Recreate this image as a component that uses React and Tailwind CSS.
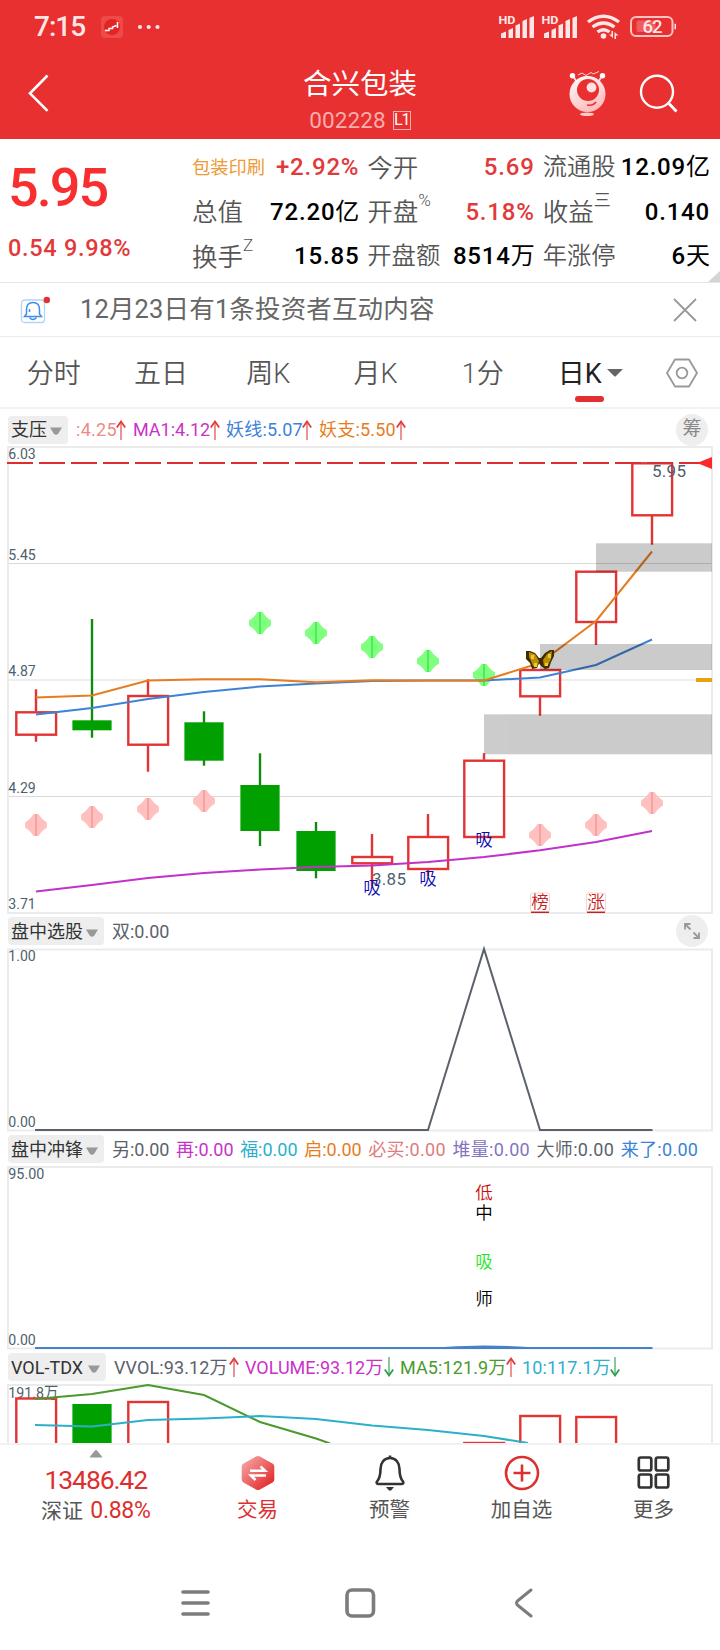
import React from "react";

// 每根K线的中心 x 坐标
const cx = (i) => 36 + i * 56;

const toPoints = (ys) => ys.map((y, i) => `${cx(i)},${y}`).join(" ");

const QUOTE_COLUMNS = [
  [
    { label: "包装印刷", value: "+2.92%", tag: true, up: true },
    { label: "总值", value: "72.20", unit: "亿" },
    { label: "换手", sup: "Z", value: "15.85" },
  ],
  [
    { label: "今开", value: "5.69", up: true },
    { label: "开盘", sup: "%", value: "5.18%", up: true },
    { label: "开盘额", value: "8514", unit: "万" },
  ],
  [
    { label: "流通股", value: "12.09", unit: "亿" },
    { label: "收益", sup: "三", value: "0.140" },
    { label: "年涨停", value: "6", unit: "天" },
  ],
];

const PERIODS = ["分时", "五日", "周K", "月K", "1分", "日K"];

// [high, top, bottom, low]
const CANDLES = [
  { up: true, p: [689.3, 711.3, 735.7, 741.7] },
  { up: false, p: [619, 720.3, 730.3, 737.7] },
  { up: true, p: [679.3, 695, 745.7, 771.7] },
  { up: false, p: [711.3, 722.3, 760.7, 765.7] },
  { up: false, p: [753.3, 785, 831, 846] },
  { up: false, p: [822, 831, 871, 878.3] },
  { up: true, p: [834, 856, 864.3, 886] },
  { up: true, p: [814, 836, 870, 876] },
  { up: true, p: [753.3, 759.7, 838, 838] },
  { up: true, p: [669, 669, 697.3, 715.7] },
  { up: true, p: [570.7, 570.7, 623, 645] },
  { up: true, p: [462.3, 462.3, 516.3, 544.7] },
];

const ORANGE_LINE = [697.5, 695.5, 680.5, 679.3, 679.3, 682.3, 680.3, 680.5, 680.5, 663, 621, 551.5];
const BLUE_LINE = [714.5, 708, 699, 692, 686.5, 683.5, 681, 680.5, 680.5, 677.5, 665, 639.5];
const PURPLE_LINE = [891.5, 885, 878, 873, 869.5, 867, 865.5, 862, 857, 850.3, 842, 831];

const RED_MARKS = [[0, 825], [1, 817], [2, 809], [3, 801], [9, 835], [10, 825], [11, 803]];
const GREEN_MARKS = [[4, 623], [5, 633], [6, 647], [7, 661], [8, 675]];

const Arrow = ({ down }) => (
  <svg width="10" height="20" viewBox="0 0 10 20" fill="none" className="shrink-0">
    {down ? (
      <g stroke="#2f9e4f">
        <path d="M5 0v18" strokeWidth="1.6" opacity="0.7" />
        <path d="M0.8 12.5 5 18.5 9.2 12.5" strokeWidth="1.8" />
      </g>
    ) : (
      <g stroke="#e03c3c">
        <path d="M5 2v18" strokeWidth="1.6" opacity="0.7" />
        <path d="M0.8 7.5 5 1.5 9.2 7.5" strokeWidth="1.8" />
      </g>
    )}
  </svg>
);

const Caret = () => (
  <svg width="12" height="8" viewBox="0 0 12 8" className="mt-[3px] shrink-0">
    <path d="M0 .5h12L8 7q-2 1.4-4 0z" fill="#999" />
  </svg>
);

const IndicatorButton = ({ children, className }) => (
  <div
    className={`flex h-[28px] items-center justify-between rounded-[4px] bg-[#eeeeee] pl-[3px] text-[18px] text-[#333] ${className}`}
  >
    <span className="whitespace-nowrap">{children}</span>
    <Caret />
  </div>
);

const StatusBar = () => (
  <div className="flex h-[54px] items-center pl-[34px] text-[#ffe6e6]">
    <span className="w-[50px] text-[28px] font-medium leading-none tracking-[-1px]">7:15</span>
    <svg width="60" height="24" viewBox="0 0 60 24" className="ml-4">
      <rect x="1" y="1" width="22" height="22" rx="4" fill="#ef4a4a" />
      <circle cx="12" cy="12" r="8" fill="#e32424" />
      <path d="M5 15.500h4v-2h3.500v-1.500l4-1.500M17.500 7v6" stroke="#fff" strokeWidth="1.5" fill="none" />
      <g fill="#ffe6e6">
        <circle cx="40" cy="12" r="2.1" />
        <circle cx="48.700" cy="12" r="2.1" />
        <circle cx="57.500" cy="12" r="2.1" />
      </g>
    </svg>
    <svg width="180" height="28" viewBox="496 13 180 28" className="ml-auto mr-[44px]" fill="#ffe6e6">
      {[499, 542].map((x) => (
        <g key={x}>
          <text x={x - 0.5} y="24" fontSize="11.5" fontWeight="700" textLength="17" lengthAdjust="spacingAndGlyphs">HD</text>
          <path d={`M${x + 2} 38v-4.500l5-2v6.500zM${x + 9.5} 38v-8l4.500-2v10zM${x + 16.5} 38V25.500l4.500-2V38zM${x + 23.5} 38V21l4.500-2v19zM${x + 30.5} 38V18l4.500-2v22z`} />
        </g>
      ))}
      <g fill="none" stroke="#ffe6e6" strokeWidth="3.400">
        <path d="M588 22q15.500-11.500 31 0" />
        <path d="M592.500 27q11-8 22 0" />
        <path d="M597.500 32q6-4.500 12 0" />
      </g>
      <circle cx="603.500" cy="36" r="2.800" />
      <path d="M613 31v7l-4-3.500h2.500V31zM614.500 39v-7l4 3.500h-2.500V39z" />
      <rect x="631" y="17" width="41.500" height="19" rx="5" fill="none" stroke="#ffc2c2" strokeWidth="2" />
      <rect x="636.500" y="20.500" width="19" height="11.500" rx="2" opacity="0.250" />
      <path d="M674.500 23.500q2.500 0 2.500 3t-2.500 3z" />
      <text x="642.500" y="33" fontSize="18.500" fontWeight="500" textLength="20">62</text>
    </svg>
  </div>
);

const Header = () => (
  <header className="h-[139px] bg-[#e83030]">
    <StatusBar />
    <div className="flex h-[85px] items-start">
      <svg width="213" height="80" viewBox="0 54 213 80" fill="none">
        <path d="M47.500 75.500 30 93.300l17.500 17.500" stroke="#fff" strokeWidth="2.600" />
      </svg>
      <div className="flex w-[294px] flex-col items-center pt-3 text-white">
        <h1 className="text-[28.500px] font-normal leading-[38px]">合兴包装</h1>
        <div className="mt-[3px] flex items-center gap-[7px]">
          <span className="text-[22.500px] leading-[26px] tracking-[0.1px] text-[#f9aeae]">002228</span>
          <span className="flex h-[19px] w-[18px] items-center justify-center border border-[#f9aeae] text-[16px] leading-none tracking-[-1px]">
            L1
          </span>
        </div>
      </div>
      <svg width="213" height="80" viewBox="507 54 213 80" fill="none">
        <defs>
          <linearGradient id="bot" x1="0" y1="0" x2="0.500" y2="1">
            <stop offset="0" stopColor="#fff" />
            <stop offset="1" stopColor="#ffbcbc" />
          </linearGradient>
        </defs>
        <path d="m573 76 4.500 7m24.500-7-4.500 7" stroke="#ffd8d8" strokeWidth="1.800" />
        <circle cx="572.500" cy="75.800" r="2.700" fill="#fff" />
        <circle cx="602.500" cy="75.800" r="2.700" fill="#fff" />
        <path d="m578 75 4-2 4 2.500 5-3 2 1.500 6-2.500" stroke="#ffd8d8" />
        <circle cx="587.500" cy="94" r="18" fill="url(#bot)" />
        <circle cx="588" cy="90" r="11" fill="#e83030" />
        <circle cx="591.500" cy="87.500" r="4.900" fill="#ffe2e2" />
        <path d="M587 105q6 1 9-3" stroke="#e83030" strokeWidth="1.600" />
        <ellipse cx="587" cy="114.300" rx="7" ry="1.700" fill="#ffcaca" />
        <circle cx="657" cy="91.700" r="16" stroke="#fff" strokeWidth="2.400" />
        <path d="m668 102.500 8.500 9" stroke="#fff" strokeWidth="2.800" />
      </svg>
    </div>
  </header>
);

const Quote = () => (
  <section className="relative flex h-[144px] border-b border-[#e6e6e6] bg-white">
    <div className="w-[192px] pl-2 text-[#f92f2f]">
      <div className="pt-[16px] text-[54px] font-medium leading-[66px] tracking-[-2px]">5.95</div>
      <div className="pt-[14px] text-[23.500px] font-medium leading-[26px] tracking-[0.700px] text-[#e23a3a]">
        0.54 9.98%
      </div>
    </div>
    <div className="grid w-[518px] grid-cols-3 gap-x-[8px] pt-[6px]">
      {QUOTE_COLUMNS.map((col, i) => (
        <div key={i}>
          {col.map((item) => (
            <div key={item.label} className="flex h-[44.500px] items-center justify-between whitespace-nowrap">
              <span
                className={
                  item.tag
                    ? "text-[18.300px] text-[#ee9a36]"
                    : item.label.length > 2
                      ? "text-[24.300px] font-[350] text-[#555]"
                      : "mt-px text-[25.500px] font-[350] text-[#555]"
                }
              >
                {item.label}
                {item.sup && <sup className="-top-[15px] text-[17px]">{item.sup}</sup>}
              </span>
              <span className={`text-[24px] tracking-[0.800px] ${item.up ? "text-[#e23a3a]" : "text-black"}`}>
                <span className="font-medium">{item.value}</span>
                {item.unit && <span className="tracking-normal">{item.unit}</span>}
              </span>
            </div>
          ))}
        </div>
      ))}
    </div>
    <svg width="12" height="11" viewBox="0 0 12 11" className="absolute bottom-0 right-0">
      <path d="M12 0v11H0z" fill="#d4d4d4" />
    </svg>
  </section>
);

const Notice = () => (
  <section className="flex h-[54px] items-center border-b border-[#ebebeb] pl-5 pr-[23px]">
    <svg width="32" height="28" viewBox="0 0 32 28" fill="none">
      <rect x="1.500" y="4" width="23" height="22.500" rx="3" stroke="#b5d3f5" strokeWidth="1.300" />
      <path d="M13 6.500c-4.500 0-6.500 3-6.500 7v4.500l-2 2.500h17l-2-2.500v-4.500c0-4-2-7-6.500-7z" stroke="#3f8fe8" strokeWidth="1.500" />
      <path d="M9.500 21.500q3.500 4 7 0M9.500 13v3" stroke="#3f8fe8" strokeWidth="1.500" />
      <circle cx="26.800" cy="4" r="3.200" fill="#e03030" />
    </svg>
    <span className="ml-[28px] text-[25.500px] tracking-[0.150px] text-[#666]">12月23日有1条投资者互动内容</span>
    <svg width="24" height="24" viewBox="0 0 24 24" className="ml-auto">
      <path d="m1 1 22 22M23 1 1 23" stroke="#999" strokeWidth="1.800" />
    </svg>
  </section>
);

const PeriodTabs = () => (
  <nav className="flex h-[72px] border-b-2 border-[#f2f2f2]">
    {PERIODS.map((name) => {
      const active = name === "日K";
      return (
        <div
          key={name}
          className={`relative flex w-[107.300px] items-center justify-center pt-[5px] text-[27px] ${active ? "text-[#222]" : "font-[350] text-[#555]"}`}
        >
          {name}
          {active && (
            <svg width="16" height="8" viewBox="0 0 16 8" className="ml-[5px] mt-[-4px]">
              <path d="M0 0h16L9 7q-1 1-2 0z" fill="#666" />
            </svg>
          )}
          {active && <span className="absolute bottom-[5px] left-[39px] h-[6px] w-[29px] rounded-[3px] bg-[#e23030]" />}
        </div>
      );
    })}
    <div className="flex flex-1 items-center justify-center pt-[1px]">
      <svg width="32" height="30" viewBox="0 0 32 30" fill="none" stroke="#999" strokeWidth="1.800">
        <path d="M9 1.500h14L31 15l-8 13.500H9L1 15z" strokeLinejoin="round" />
        <circle cx="16" cy="15" r="5.300" />
      </svg>
    </div>
  </nav>
);

const AxisLabel = ({ y, w = 27.5, children }) => (
  <text x="8.300" y={y} fontSize="15.500" fill="#4e5f6d" textLength={w} lengthAdjust="spacingAndGlyphs">
    {children}
  </text>
);

const Mark = ({ i, y, fill, line }) => (
  <g transform={`translate(${cx(i)} ${y})`}>
    <path d="M-2.500-11h5L5-7.500 7.500-5 11-2.500v5L7.500 5 5 7.500 2.500 11h-5L-5 7.500-7.500 5-11 2.500v-5L-7.500-5-5-7.500z" fill={fill} />
    <path d="M0-11v22" stroke={line} strokeWidth="1.600" />
  </g>
);

const Candle = ({ i, up, p: [high, top, bottom, low] }) =>
  up ? (
    <g stroke="#e23434" strokeWidth="2.400" fill="none">
      <path d={`M${cx(i)} ${high}V${top}M${cx(i)} ${bottom - 1}V${low}`} />
      <rect x={cx(i) - 19.7} y={top + 1} width="39.800" height={bottom - top - 2} />
    </g>
  ) : (
    <g>
      <path d={`M${cx(i)} ${high}V${low}`} stroke="#128a12" strokeWidth="2.400" />
      <rect x={cx(i) - 19.6} y={top} width="39.200" height={bottom - top} fill="#00a000" />
    </g>
  );

const Char = ({ x = 484, y, fill, children }) => (
  <text x={x} y={y + 6.3} fontSize="17.500" fontWeight="350" textAnchor="middle" fill={fill}>
    {children}
  </text>
);

const Butterfly = () => (
  <g>
    <path d="M526 651h4l5 2 4 5h2l4-5 5-3h4v6l-3 6-2 6-4 1-4-3-2-3-2 5-5 1-2-6-4-4z" fill="#3d2c00" />
    <path d="M529 652l6 2 4 7-2 6-4-1-2-5-2-4zM552 651l-5 3-4 6 1 6 4-1 3-6z" fill="#b98f08" />
    <path d="M531 655h3v4h-3zM548 654h3v4h-3zM534 663h3v4h-3zM545 663h3v3h-3z" fill="#f0cc20" />
  </g>
);

const MainChart = () => (
  <section>
    <div className="flex h-[37px] items-center pl-2 pr-[12px] pt-1 text-[18px]">
      <IndicatorButton className="w-[60px] pr-[6px]">支压</IndicatorButton>
      <div className="flex flex-1 items-center whitespace-nowrap pl-2">
        <span className="w-[40px] tracking-[0.300px] text-[#ee8a85]">:4.25</span>
        <Arrow />
        <span className="ml-[7px] w-[77px] text-[#c832c8]">MA1:4.12</span>
        <Arrow />
        <span className="ml-[6px] w-[76px] tracking-[0.200px] text-[#3c82d8]">妖线:5.07</span>
        <Arrow />
        <span className="ml-[7px] w-[77px] tracking-[0.200px] text-[#e67d1e]">妖支:5.50</span>
        <Arrow />
      </div>
      <span className="flex size-8 items-center justify-center rounded-full bg-[#eeeeee] text-[19px] text-[#888]">
        筹
      </span>
    </div>
    <svg width="720" height="468" viewBox="0 446 720 468" className="block" fill="none">
      <path d="M8 563.500h704M8 796.500h704" stroke="#dadada" />
      <path d="M8 680h704" stroke="#eee" strokeWidth="2" />
      <rect x="8" y="447" width="704" height="466" stroke="#ebebeb" strokeWidth="2" />
      {CANDLES.map((c, i) => (
        <Candle key={i} i={i} {...c} />
      ))}
      {RED_MARKS.map(([i, y]) => (
        <Mark key={i} i={i} y={y} fill="#ffc0c0" line="#f99a9a" />
      ))}
      {GREEN_MARKS.map(([i, y]) => (
        <Mark key={i} i={i} y={y} fill="#80ff80" line="#3fea4a" />
      ))}
      <g strokeWidth="2">
        <polyline points={toPoints(BLUE_LINE)} stroke="#3f82d4" />
        <polyline points={toPoints(ORANGE_LINE)} stroke="#e67d1e" />
        <polyline points={toPoints(PURPLE_LINE)} stroke="#c032c8" />
      </g>
      <g fill="#000" opacity="0.200">
        <rect x="596" y="543.300" width="116" height="28.400" />
        <rect x="540" y="644" width="172" height="26" />
        <rect x="484" y="714.300" width="228" height="40" />
      </g>
      <path d="M7 463h705" stroke="#e02c2c" strokeWidth="2" strokeDasharray="26 6" />
      <path d="m697 463 15-6v12z" fill="#fa2a2a" />
      <path d="M696 680h16" stroke="#e8a010" strokeWidth="4" />
      <AxisLabel y="459">6.03</AxisLabel>
      <AxisLabel y="560">5.45</AxisLabel>
      <AxisLabel y="676">4.87</AxisLabel>
      <AxisLabel y="793">4.29</AxisLabel>
      <AxisLabel y="909">3.71</AxisLabel>
      <g fontSize="17" fill="#4e5f6d">
        <text x="652" y="476.700" textLength="34">5.95</text>
        <text x="372" y="885" textLength="34">3.85</text>
      </g>
      <Char x={372} y={887.7} fill="#0c0cb4">吸</Char>
      <Char x={428} y={878.3} fill="#0c0cb4">吸</Char>
      <Char x={484} y={840} fill="#0c0cb4">吸</Char>
      {[540, 596].map((x) => (
        <g key={x}>
          <rect x={x - 9.5} y="893" width="19" height="19" rx="2" stroke="#f6d4d4" />
          <path d={`M${x - 9} 912.300h18`} stroke="#c02020" strokeWidth="1.400" />
        </g>
      ))}
      <Char x={540} y={902} fill="#c81e1e">榜</Char>
      <Char x={596} y={902} fill="#c81e1e">涨</Char>
      <Butterfly />
    </svg>
  </section>
);

const PickChart = () => (
  <section>
    <div className="flex h-[34px] items-center pl-2 pr-[12px] text-[18px]">
      <IndicatorButton className="w-[96px] pr-[6px]">盘中选股</IndicatorButton>
      <span className="flex-1 pl-[8px] text-[#5b626b]">双:0.00</span>
      <span className="flex size-8 items-center justify-center rounded-full bg-[#eeeeee]">
        <svg width="18" height="18" viewBox="0 0 18 18" fill="none" stroke="#999" strokeWidth="1.800">
          <path d="M2 7.500V2h5.500M2 2l5.500 5.500M16 10.500V16h-5.500M16 16l-5.500-5.500" />
        </svg>
      </span>
    </div>
    <svg width="720" height="184" viewBox="0 948 720 184" className="block overflow-visible" fill="none">
      <rect x="8" y="949.500" width="704" height="181" stroke="#ebebeb" strokeWidth="2" />
      <AxisLabel y="961">1.00</AxisLabel>
      <AxisLabel y="1127">0.00</AxisLabel>
      <path d="M35 1130h393l56-181 56 181h112.500" stroke="#5b626b" strokeWidth="2" />
    </svg>
  </section>
);

const SURGE_LEGEND = [
  { text: "另:0.00", color: "text-[#5b626b]" },
  { text: "再:0.00", color: "text-[#c832c8]" },
  { text: "福:0.00", color: "text-[#2cb0cc]" },
  { text: "启:0.00", color: "text-[#e67d1e]" },
  { text: "必买:0.00", color: "text-[#e07c7c] tracking-[0.300px]" },
  { text: "堆量:0.00", color: "text-[#8474c0] tracking-[0.300px]" },
  { text: "大师:0.00", color: "text-[#5b626b] tracking-[0.300px]" },
  { text: "来了:0.00", color: "text-[#3c82d8] tracking-[0.300px]" },
];

const SurgeChart = () => (
  <section>
    <div className="flex h-[34px] items-center pl-2 text-[18px]">
      <IndicatorButton className="w-[96px] pr-[6px]">盘中冲锋</IndicatorButton>
      <div className="flex gap-[6.600px] whitespace-nowrap pl-[8px]">
        {SURGE_LEGEND.map((item) => (
          <span key={item.text} className={item.color}>
            {item.text}
          </span>
        ))}
      </div>
    </div>
    <svg width="720" height="184" viewBox="0 1166 720 184" className="block" fill="none">
      <rect x="8" y="1167" width="704" height="181.500" stroke="#ebebeb" strokeWidth="2" />
      <AxisLabel y="1179" w={36}>95.00</AxisLabel>
      <AxisLabel y="1345">0.00</AxisLabel>
      <path d="M35 1348h617.500" stroke="#4682c8" strokeWidth="2" />
      <path d="M428 1348q56-5 112 0z" fill="#4682c8" />
      <Char y={1193} fill="#c80f0f">低</Char>
      <Char y={1213} fill="#000">中</Char>
      <Char y={1261.500} fill="#1fe61f">吸</Char>
      <Char y={1299} fill="#000">师</Char>
    </svg>
  </section>
);

const VolumeChart = () => (
  <section>
    <div className="flex h-[34px] items-center pl-2 text-[18px]">
      <IndicatorButton className="w-[98px] pr-[6px]">VOL-TDX</IndicatorButton>
      <div className="flex items-center whitespace-nowrap pl-2">
        <span className="w-[115px] tracking-[0.100px] text-[#5b626b]">VVOL:93.12万</span>
        <Arrow />
        <span className="ml-[6px] w-[139px] text-[#c832c8]">VOLUME:93.12万</span>
        <Arrow down />
        <span className="ml-[6px] w-[106px] tracking-[0.100px] text-[#4a9a2c]">MA5:121.9万</span>
        <Arrow />
        <span className="ml-[6px] w-[88px] tracking-[0.100px] text-[#2cb0cc]">10:117.1万</span>
        <Arrow down />
      </div>
    </div>
    <svg width="720" height="59" viewBox="0 1384 720 59" className="block" fill="none">
      <path d="M8 1443v-58h704v58" stroke="#ebebeb" strokeWidth="2" />
      <AxisLabel y="1397.500" w={50}>191.8万</AxisLabel>
      <g stroke="#e23434" strokeWidth="2.400">
        <rect x="16.300" y="1398.500" width="39.800" height="60" />
        <rect x="128.300" y="1402" width="39.800" height="60" />
        <rect x="464.300" y="1443" width="39.800" height="60" />
        <rect x="520.300" y="1416" width="39.800" height="60" />
        <rect x="576.300" y="1417" width="39.800" height="60" />
      </g>
      <rect x="72.400" y="1404" width="39.200" height="60" fill="#00a000" />
      <g strokeWidth="2">
        <path d="m35 1399 57-5 56-9 56 10 56 27 56 16.500 14 5" stroke="#4a9a2c" />
        <path d="m35 1425 57 1.500 56-6.500 56-1.500 56-2.500 56 3 56 6.500 56 4.500 56 6 44 7" stroke="#2cb0c8" />
      </g>
    </svg>
  </section>
);

const TradeIcon = () => (
  <svg width="36" height="38" viewBox="0 0 36 38">
    <defs>
      <linearGradient id="trade" x1="0" y1="0" x2="1" y2="1">
        <stop offset="0" stopColor="#f8b0b0" />
        <stop offset="1" stopColor="#e01818" />
      </linearGradient>
    </defs>
    <path d="M16 2.500q2-1.200 4 0l12.500 7q1.800 1 1.800 3v13q0 2-1.800 3l-12.500 7q-2 1.200-4 0l-12.500-7q-1.800-1-1.800-3v-13q0-2 1.800-3z" fill="url(#trade)" />
    <path d="M10 16.800h15l-4.500-4.500M26 21.500H11l4.500 4.500" stroke="#fff" strokeWidth="2.600" fill="none" />
  </svg>
);

const BellIcon = () => (
  <svg width="36" height="38" viewBox="0 0 36 38" fill="none" stroke="#333" strokeWidth="2.600">
    <path d="M18 4c-6 0-9.500 5-9.500 11 0 6-.5 9-3.500 12.500-1 1.500 0 2.500 1.500 2.500h23c1.500 0 2.500-1 1.500-2.500-3-3.500-3.500-6.500-3.500-12.500 0-6-3.500-11-9.500-11z" />
    <path d="M18 4V1.500" />
    <path d="M14 33h8l-3 3.500h-2z" fill="#333" stroke="none" />
  </svg>
);

const AddIcon = () => (
  <svg width="36" height="38" viewBox="0 0 36 38" fill="none" stroke="#dc3030" strokeWidth="2.600">
    <circle cx="18" cy="19" r="16" />
    <path d="M9.500 19h17M18 10.500v17" />
  </svg>
);

const MoreIcon = () => (
  <svg width="36" height="38" viewBox="0 0 36 38" fill="none" stroke="#333" strokeWidth="2.700">
    <rect x="2.800" y="3.500" width="12.500" height="13" rx="2" />
    <rect x="19.800" y="3.500" width="12.500" height="13" rx="2" />
    <rect x="2.800" y="20.500" width="12.500" height="13" rx="2" />
    <rect x="19.800" y="20.500" width="12.500" height="13" rx="2" />
  </svg>
);

const ACTIONS = [
  { label: "交易", icon: <TradeIcon />, active: true },
  { label: "预警", icon: <BellIcon /> },
  { label: "加自选", icon: <AddIcon /> },
  { label: "更多", icon: <MoreIcon /> },
];

const BottomBar = () => (
  <footer className="flex h-[108px] border-t-2 border-[#f2f2f2]">
    <div className="flex w-[191.500px] flex-col items-center pt-[5px]">
      <svg width="12" height="8" viewBox="0 0 12 8">
        <path d="M5 .5q1-1 2 0l5 6v1H0v-1z" fill="#999" />
      </svg>
      <span className="mt-[6px] text-[26.500px] leading-[32px] tracking-[-1.100px] text-[#dc3030]">13486.42</span>
      <span className="mt-[1px] text-[21px] leading-[28px] text-[#555]">
        深证 <span className="ml-[2px] text-[23px] tracking-[-0.300px] text-[#dc3030]">0.88%</span>
      </span>
    </div>
    {ACTIONS.map((a) => (
      <div key={a.label} className="flex w-[132px] flex-col items-center pt-[9px]">
        {a.icon}
        <span className={`mt-[4px] text-[20.500px] leading-[28px] ${a.active ? "text-[#dc3030]" : "text-[#555]"}`}>
          {a.label}
        </span>
      </div>
    ))}
  </footer>
);

const SystemNav = () => (
  <div className="flex h-[99px] pl-[181px] pt-[36px]">
    <svg width="352" height="32" viewBox="181 1587 352 32" fill="none" stroke="#7c7c7c" strokeWidth="3.600" strokeLinecap="round">
      <path d="M183 1592h25M183 1603h25M183 1614h25" />
      <rect x="347" y="1590" width="26.500" height="26" rx="5" />
      <path d="m531 1590-13 10.500q-3 2.500 0 5l13 10.500" strokeWidth="3" />
    </svg>
  </div>
);

const App = () => (
  <div className="h-[1650px] w-[720px] overflow-hidden bg-white font-['Roboto','Noto_Sans_CJK_SC',sans-serif]">
    <Header />
    <Quote />
    <Notice />
    <PeriodTabs />
    <MainChart />
    <PickChart />
    <SurgeChart />
    <VolumeChart />
    <BottomBar />
    <SystemNav />
  </div>
);

export default App;
